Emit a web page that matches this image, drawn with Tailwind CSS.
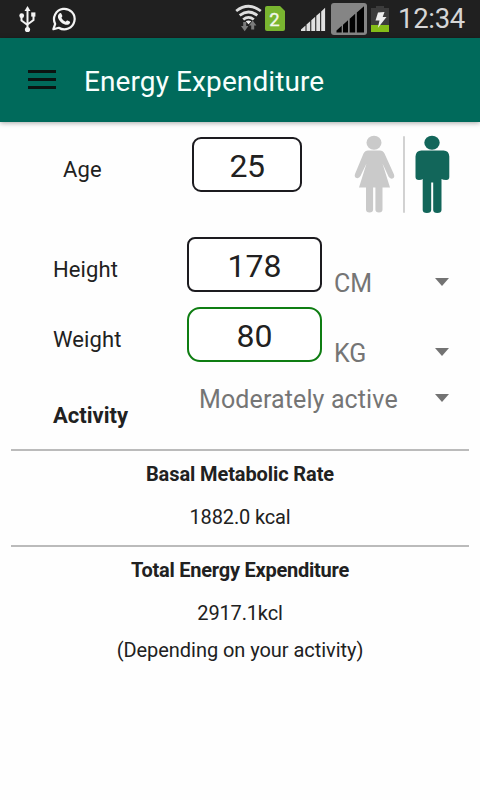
<!DOCTYPE html>
<html lang="en">
<head>
<meta charset="utf-8">
<title>Energy Expenditure</title>
<script src="https://cdn.jsdelivr.net/npm/@tailwindcss/browser@4"></script>
</head>
<body class="w-[480px] h-[800px] overflow-hidden bg-[#fefefe] font-['Roboto',sans-serif] text-[#212121] flex flex-col whitespace-nowrap">
<div class="h-[38px] shrink-0 bg-[#202020] flex items-center">
  <svg class="w-[398px] h-[38px] shrink-0" viewBox="0 0 398 38">
    <!-- usb -->
    <g fill="none" stroke="#f4f4f4" stroke-width="2"><path d="M27.500 10V30M21.500 16v4.500l6 4.500M33.500 15v5l-6 4.500"/></g>
    <path d="M27.500 6l3 5h-6z" fill="#f4f4f4"/><circle cx="27.500" cy="29.500" r="2.600" fill="#f4f4f4"/><circle cx="21.700" cy="15.700" r="2.400" fill="#f4f4f4"/><path d="M31.200 12.400h4.200v4.200h-4.200z" fill="#f4f4f4"/>
    <!-- messenger -->
    <path d="M53.400 29.200l1.800-5.300A10.300 10.300 0 1 1 58.800 27.800z" fill="none" stroke="#f4f4f4" stroke-width="2.200" stroke-linejoin="round"/>
    <path d="M59.700 13.300c.8-.6 1.400-.2 1.700.5l.9 2c.2.600-.3 1.200-.9 1.900 1 2 2.400 3.200 4.300 4 .7-.7 1.200-1.500 1.900-1.200l2 1c.7.400.6 1.100.2 1.700-1.100 1.800-3.300 1.900-5.500 1-3.100-1.200-5.400-3.900-6.200-6.300-.5-1.800.1-3.500 1.600-4.600z" fill="#f4f4f4"/>
    <!-- wifi -->
    <g fill="none" stroke="#dedede" stroke-width="2.800"><path d="M236.200 11q12.300-9.400 24.600 0M239.700 15.400q8.800-6.800 17.600 0M243.200 19.500q5.300-4.200 10.600 0"/></g>
    <path d="M245.700 21.300q2.800-1.800 5.600 0l-2.800 3z" fill="#eee"/>
    <path d="M243.200 22h3v4h2.200l-3.700 5.200-3.700-5.200h2.200zM251.200 29.500h3v-4h2.200l-3.700-5-3.700 5h2.200z" fill="#7b7b7b"/>
    <!-- sim -->
    <path d="M265 8q0-2 2-2h13l5 5v18q0 2-2 2h-16q-2 0-2-2z" fill="#79b530"/>
    <text x="269.300" y="25.600" font-size="18.500" font-family="Roboto" fill="#f2f7ea" stroke="#f2f7ea" stroke-width=".4">2</text>
    <!-- signal -->
    <path d="M301 31v-1.500l4.500-4V31zM306.500 31v-6.500l3.700-3.300V31zM311.300 31V20.300l3.900-3.500V31zM316.300 31V15.800l3.800-3.400V31zM321.200 31V11.500l3.900-3.700V31z" fill="#e0e0e0"/>
    <rect x="331" y="3" width="36" height="32" rx="3" fill="#858585"/>
    <path d="M336.500 32.500v-2l5.200-4.700v6.700zM343 32.500v-7.800l5-4.500v12.300zM349.700 32.500V18.700l5.500-4.900v18.700zM356.800 32.500V12.500l7.200-6.300v26.300z" fill="#030303"/>
    <!-- battery -->
    <path d="M371 8h5V6h8v2h5v24h-18z" fill="#3c3c3c"/><path d="M371 25h18v7h-18z" fill="#84bd18"/>
    <path d="M378 12.500l6.500-.5-1.800 5h3.800l-8.700 11 1.700-7.500h-4z" fill="#eee"/>
  </svg>
  <span class="text-[27.5px] leading-[38px] text-[#d6d6d6] -tracking-[0.3px]">12:34</span>
</div>
<header class="h-[84px] shrink-0 bg-[#006a5b] flex items-center shadow-[0_1px_5px_rgba(0,0,0,0.35)]">
  <div class="ml-7 w-7 flex flex-col gap-[5px] pb-[2px]"><i class="h-[3px] bg-[#0b1412]"></i><i class="h-[3px] bg-[#0b1412]"></i><i class="h-[3px] bg-[#0b1412]"></i></div>
  <h1 class="ml-7 text-[28px] leading-[34px] pt-1 tracking-[0.1px] text-[#f7fffd]">Energy Expenditure</h1>
</header>
<main class="flex flex-col">
  <section class="h-[115px] flex pt-[15px]">
    <label class="w-[192px] pl-[63px] pt-[19px] text-[22px] leading-7 tracking-[0.1px]">Age</label>
    <div class="w-[110px] h-[55px] rounded-[9px] border-2 border-[#1c1b1f] bg-white text-center text-[32px] leading-[54px] -tracking-[0.5px]">25</div>
    <svg class="ml-[48px] -mt-[2px] w-[110px] h-[82px]" viewBox="350 135 110 82">
      <g fill="#cacaca"><ellipse cx="374" cy="142.800" rx="7.500" ry="7"/>
      <path d="M368 150.500h12q3 0 4.500 3l9.500 21q1 3-1.500 4-2.500.7-4-2l-6-13 7.500 24h-7.500v22q0 3-3.500 3-3.600 0-3.600-3v-22h-2.300v22q0 3-3.600 3-3.500 0-3.500-3v-22h-7l7.500-24-6 12.500q-1.500 2.700-4 2-2.500-1-1.500-4l8.500-20.500q1.500-3 4.500-3z"/></g>
      <path d="M404 137v75" stroke="#cdcdcd" stroke-width="1.800" stroke-linecap="round"/>
      <g fill="#12665a"><ellipse cx="432" cy="142.800" rx="7.700" ry="7"/>
      <path d="M421.500 150.500h22q5.500 0 5.800 6v20.500q0 3-3 3-3.300 0-4.800-1V210q0 3-4.300 3-4 0-4-3v-27.500h-2v27.500q0 3-4.300 3-4.200 0-4.200-3V179q-1 1-3.700 1-3.500 0-3.500-3v-20.500q.3-6 6-6z"/></g>
    </svg>
  </section>
  <section class="h-[70px] flex">
    <label class="w-[187px] pl-[53px] pt-[18px] text-[22px] leading-[29px] tracking-[0.1px]">Height</label>
    <div class="w-[135px] h-[55px] rounded-[8px] border-2 border-[#1c1b1f] bg-white text-center text-[32px] leading-[54px]">178</div>
    <span class="w-[113px] pl-3 pt-[32px] text-[25px] leading-[30px] text-[#757575]">CM</span>
    <svg class="mt-[41px] w-[14px] h-[8px]" viewBox="0 0 14 8"><path d="M0 0h14L7 8z" fill="#737373"/></svg>
  </section>
  <section class="h-[70px] flex">
    <label class="w-[187px] pl-[53px] pt-[18px] text-[22px] leading-[29px] tracking-[0.1px]">Weight</label>
    <div class="w-[135px] h-[55px] rounded-[13px] border-2 border-[#0e7d12] bg-white text-center text-[32px] leading-[54px]">80</div>
    <span class="w-[113px] pl-3 pt-[32px] text-[25px] leading-[30px] text-[#757575]">KG</span>
    <svg class="mt-[41px] w-[14px] h-[8px]" viewBox="0 0 14 8"><path d="M0 0h14L7 8z" fill="#737373"/></svg>
  </section>
  <section class="h-[72px] flex">
    <label class="w-[198px] pl-[53px] pt-[25px] text-[22px] leading-7 font-bold">Activity</label>
    <span class="w-[237px] pl-px pt-[8px] text-[25px] leading-[30px] tracking-[0.12px] text-[#757575]">Moderately active</span>
    <svg class="mt-[17px] w-[14px] h-[8px]" viewBox="0 0 14 8"><path d="M0 0h14L7 8z" fill="#737373"/></svg>
  </section>
  <section class="mx-[11px] h-[96px] border-t-2 border-[#bbb] text-center text-[20px] leading-[26px] pt-[10px]">
    <h2 class="font-bold -tracking-[0.1px]">Basal Metabolic Rate</h2>
    <p class="mt-[17px] -tracking-[0.15px]">1882.0 kcal</p>
  </section>
  <section class="mx-[11px] border-t-2 border-[#bbb] text-center text-[20px] leading-[26px] pt-[10px]">
    <h2 class="font-bold -tracking-[0.24px]">Total Energy Expenditure</h2>
    <p class="mt-[17px] -tracking-[0.15px]">2917.1kcl</p>
    <p class="mt-[11px] -tracking-[0.05px]">(Depending on your activity)</p>
  </section>
</main>
</body>
</html>
